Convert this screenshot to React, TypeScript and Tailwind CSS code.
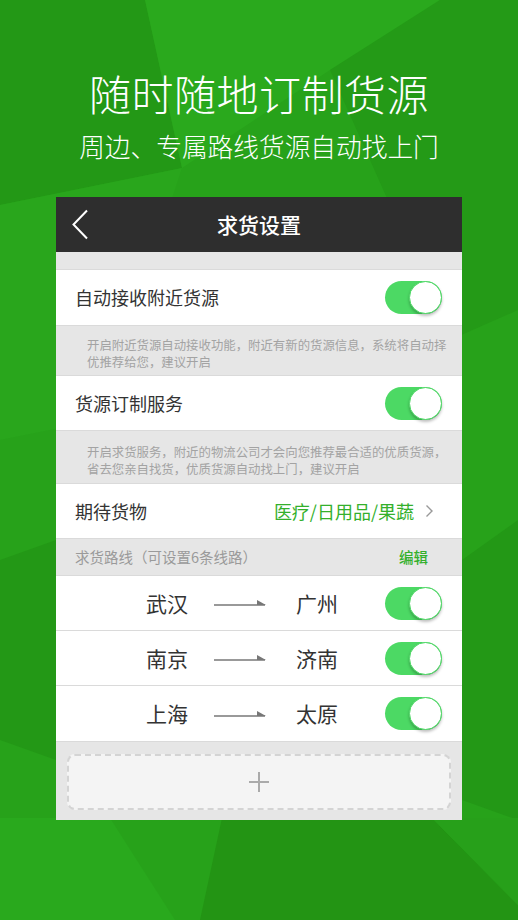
import React from "react";

const CJK = { fontFamily: '"Noto Sans CJK SC", "Noto Sans", sans-serif' };

function Toggle() {
  return (
    <div className="relative h-[33px] w-[57px] rounded-full bg-[#4cd964]">
      <div className="absolute right-0 top-0 h-[33px] w-[33px] rounded-full border border-[#4cd964] bg-white shadow-[0_2px_3px_rgba(0,0,0,0.25)]" />
    </div>
  );
}

function Arrow() {
  return (
    <svg width="54" height="10" viewBox="0 0 54 10">
      <line x1="1" y1="7" x2="52" y2="7" stroke="#777" strokeWidth="1.6" />
      <path d="M44 2 L53 7 L44 7 Z" fill="#777" />
    </svg>
  );
}

const ROUTES = [
  ["武汉", "广州"],
  ["南京", "济南"],
  ["上海", "太原"],
];

export default function App() {
  return (
    <div className="relative h-[920px] w-[518px] overflow-hidden bg-[#27a21a]" style={CJK}>
      {/* faceted background */}
      <svg className="absolute inset-0" width="518" height="920" viewBox="0 0 518 920">
        <polygon points="0,0 145,0 182,168 0,205" fill="#239816" />
        <polygon points="145,0 440,0 330,70 182,168" fill="#2aa91d" />
        <polygon points="440,0 518,0 518,310 450,340 330,70" fill="#249a17" />
        <polygon points="0,205 182,168 100,420 0,440" fill="#29a61c" />
        <polygon points="0,560 56,540 56,760 0,740" fill="#239816" />
        <polygon points="462,560 518,520 518,820 462,800" fill="#239816" />
        <polygon points="0,818 110,818 175,920 0,920" fill="#29a91d" />
        <polygon points="222,818 432,818 518,905 518,920 200,920" fill="#239414" />
        <polygon points="432,818 518,818 518,905" fill="#27a01a" />
      </svg>

      <div className="relative flex flex-col items-center pt-[68px]">
        <h1 className="text-[42px] font-light leading-[50px] tracking-[0.5px] text-white">随时随地订制货源</h1>
        <p className="mt-[12px] text-[25.7px] font-light leading-[31px] text-white">周边、专属路线货源自动找上门</p>
      </div>

      <div className="relative ml-[56px] mt-[36px] w-[406px] bg-[#e6e6e6]">
        {/* header */}
        <div className="relative flex h-[55px] items-center justify-center bg-[#2e2e2e]">
          <svg className="absolute left-[15px] top-[12px]" width="18" height="31" viewBox="0 0 18 31">
            <path d="M16 1.5 L2.5 15.5 L16 29.5" fill="none" stroke="#fff" strokeWidth="2" />
          </svg>
          <span className="text-[21px] font-medium text-white">求货设置</span>
        </div>
        <div className="h-[18px] border-b border-[#dadada] bg-[#e6e6e6]" />

        <div className="flex h-[55px] items-center justify-between bg-white pl-[19px] pr-[20px]">
          <span className="text-[18px] text-[#333]">自动接收附近货源</span>
          <Toggle />
        </div>
        <div className="h-[51px] border-y border-[#dadada] pl-[31px] pt-[11px] text-[12.4px] leading-[17px] whitespace-nowrap text-[#a3a3a3]">
          <div>开启附近货源自动接收功能，附近有新的货源信息，系统将自动择</div>
          <div>优推荐给您，建议开启</div>
        </div>

        <div className="flex h-[54px] items-center justify-between bg-white pl-[19px] pr-[20px]">
          <span className="text-[18px] text-[#333]">货源订制服务</span>
          <Toggle />
        </div>
        <div className="h-[54px] border-y border-[#dadada] pl-[31px] pt-[13px] text-[12.4px] leading-[17px] whitespace-nowrap text-[#a3a3a3]">
          <div>开启求货服务，附近的物流公司才会向您推荐最合适的优质货源，</div>
          <div>省去您亲自找货，优质货源自动找上门，建议开启</div>
        </div>

        <div className="flex h-[54px] items-center bg-white pl-[19px] pr-[28px]">
          <span className="text-[18px] text-[#333]">期待货物</span>
          <span className="ml-auto text-[18px] text-[#34b02c]">医疗/日用品/果蔬</span>
          <svg className="ml-[11px]" width="9" height="14" viewBox="0 0 9 14">
            <path d="M1.5 1.5 L7 7 L1.5 12.5" fill="none" stroke="#999" strokeWidth="1.4" />
          </svg>
        </div>
        <div className="flex h-[38px] items-center border-y border-[#dadada] pl-[19px] pr-[34px]">
          <span className="text-[14.5px] text-[#9a9a9a]">求货路线（可设置6条线路）</span>
          <span className="ml-auto text-[14.5px] font-medium text-[#34b02c]">编辑</span>
        </div>

        {ROUTES.map(([a, b], i) => (
          <div
            key={i}
            className={`flex h-[55px] items-center bg-white pl-[90px] pr-[20px] ${i < 2 ? "border-b border-[#dadada]" : ""}`}
          >
            <span className="w-[44px] text-[21px] leading-none text-[#333]">{a}</span>
            <span className="ml-[23px]">
              <Arrow />
            </span>
            <span className="ml-[29px] w-[44px] text-[21px] leading-none text-[#333]">{b}</span>
            <span className="ml-auto">
              <Toggle />
            </span>
          </div>
        ))}

        <div className="border-t border-[#dadada] px-[11px] pb-[10px] pt-[12px]">
          <div className="flex h-[56px] items-center justify-center rounded-lg border-2 border-dashed border-[#d4d4d4] bg-[#f4f4f4]">
            <svg width="22" height="22" viewBox="0 0 22 22">
              <path d="M11 1 V21 M1 11 H21" stroke="#aaa" strokeWidth="2" />
            </svg>
          </div>
        </div>
      </div>
    </div>
  );
}
